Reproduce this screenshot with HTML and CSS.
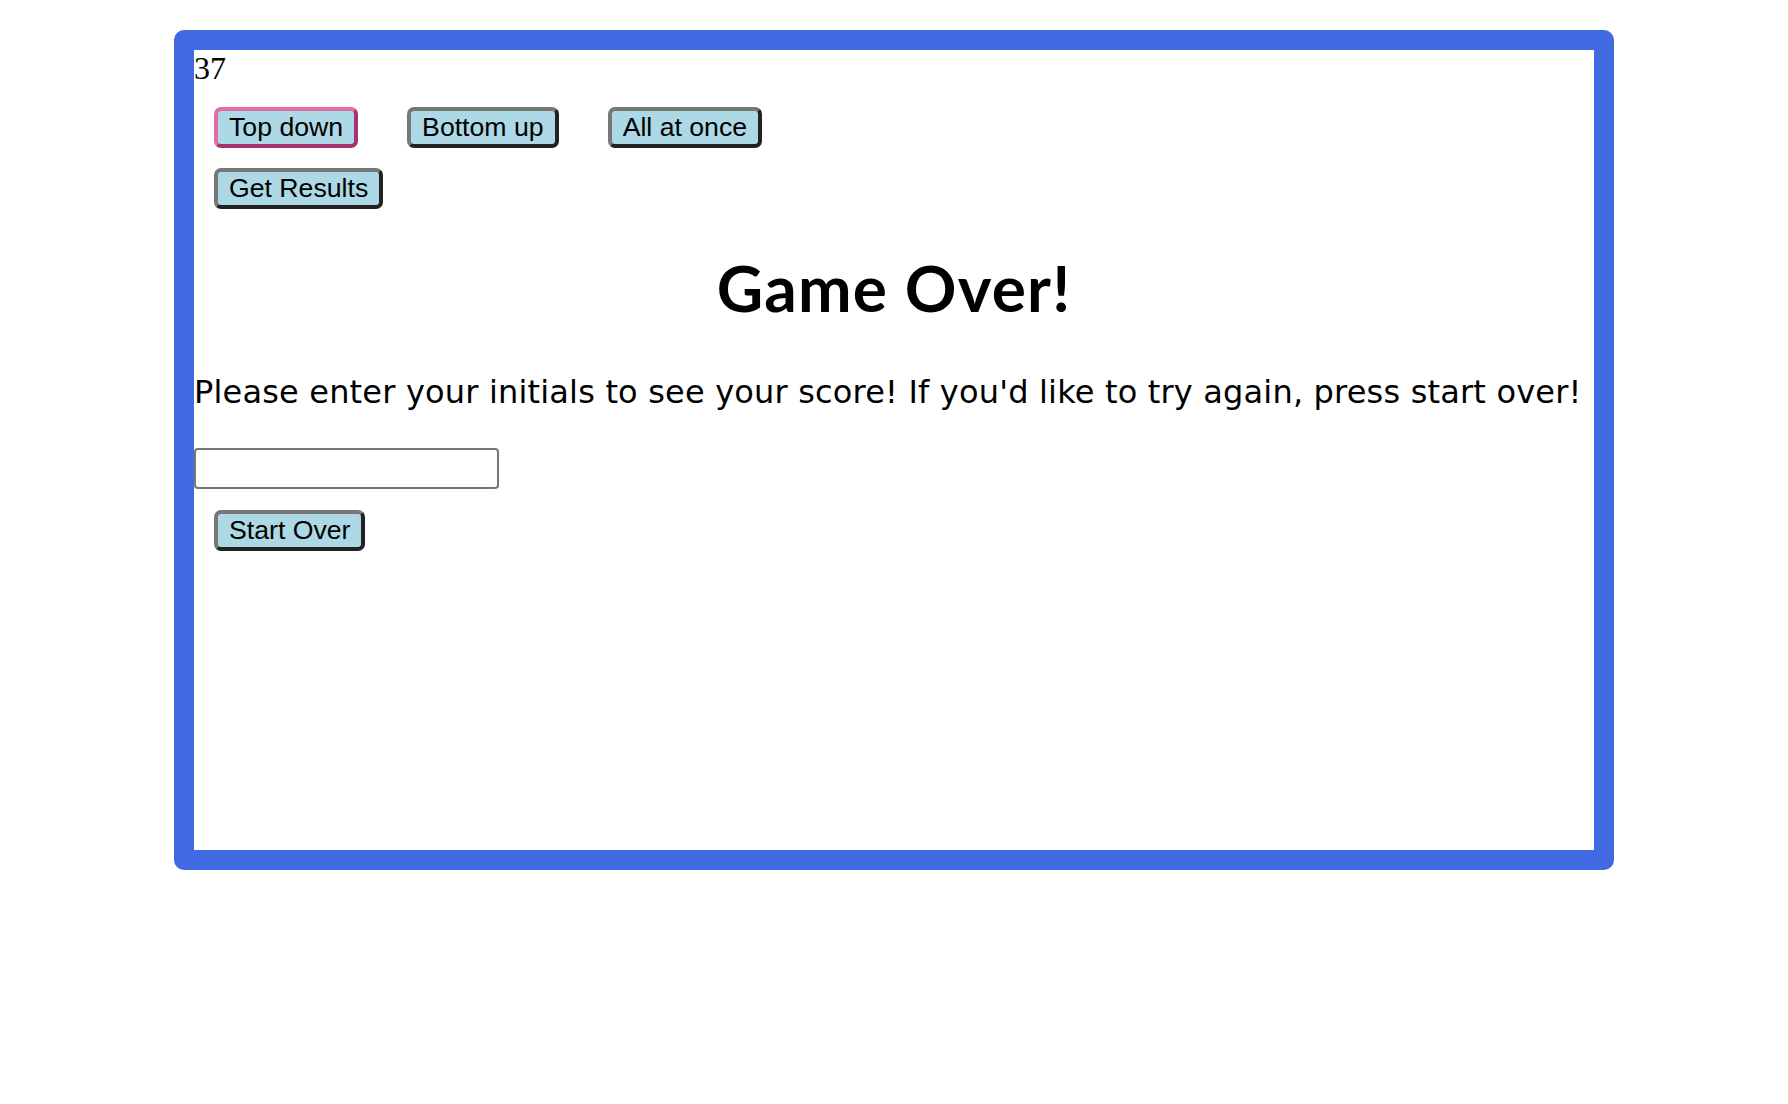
FILE: index.html
```html
<!DOCTYPE html>
<html lang="en">
<head>
<meta charset="utf-8">
<title>Game Over</title>
<link rel="stylesheet" href="styles.css">
</head>
<body>
<div class="frame">
  <div class="score">37</div>
  <div class="controls">
    <div class="row">
      <button class="btn btn-active">Top down</button>
      <button class="btn">Bottom up</button>
      <button class="btn">All at once</button>
    </div>
    <div class="row">
      <button class="btn">Get Results</button>
    </div>
  </div>
  <h1 class="title">Game Over!</h1>
  <p class="message">Please enter your initials to see your score! If you'd like to try again, press start over!</p>
  <input class="initials" type="text">
  <div class="restart">
    <button class="btn">Start Over</button>
  </div>
</div>
</body>
</html>
```

FILE: styles.css
```css
html, body {
  margin: 0;
  padding: 0;
  background: #ffffff;
}

.frame {
  box-sizing: content-box;
  width: 1400px;
  height: 800px;
  margin: 30px auto 0;
  border: 20px solid #4169e1;
  border-radius: 10px;
  font-family: "Liberation Serif", "Times New Roman", serif;
  font-size: 32px;
  color: #000;
}

.score {
  line-height: 37px;
  height: 37px;
}

.controls {
  display: flex;
  flex-direction: column;
  gap: 20px;
  padding: 20px 0 0 20px;
}

.row {
  display: flex;
  gap: 49px;
}

.btn {
  box-sizing: border-box;
  height: 41px;
  font-family: "Liberation Sans", Arial, sans-serif;
  font-size: 26.67px;
  line-height: 31px;
  padding: 1px 11px;
  background: #add8e6;
  color: #000;
  border-width: 4px;
  border-style: solid;
  border-color: #777777 #222222 #222222 #777777;
  border-radius: 7px;
  cursor: pointer;
}

.btn-active {
  border-color: #e46aa4 #a8326c #a8326c #e46aa4;
}

.title {
  margin: 40px 0 0;
  text-align: center;
  font-family: "Lato", "Open Sans", sans-serif;
  font-weight: 700;
  font-size: 64px;
  line-height: 77px;
  letter-spacing: 1.2px;
}

.message {
  margin: 47px 0 0;
  font-family: "DejaVu Sans", "Open Sans", sans-serif;
  font-size: 32px;
  line-height: 38px;
  letter-spacing: 0.18px;
  white-space: nowrap;
}

.initials {
  display: block;
  box-sizing: border-box;
  width: 305px;
  height: 41px;
  margin: 37px 0 0;
  border: 2px solid #767676;
  border-radius: 4px;
  background: #fff;
  font-size: 26px;
}

.restart {
  padding: 21px 0 0 20px;
}
```
